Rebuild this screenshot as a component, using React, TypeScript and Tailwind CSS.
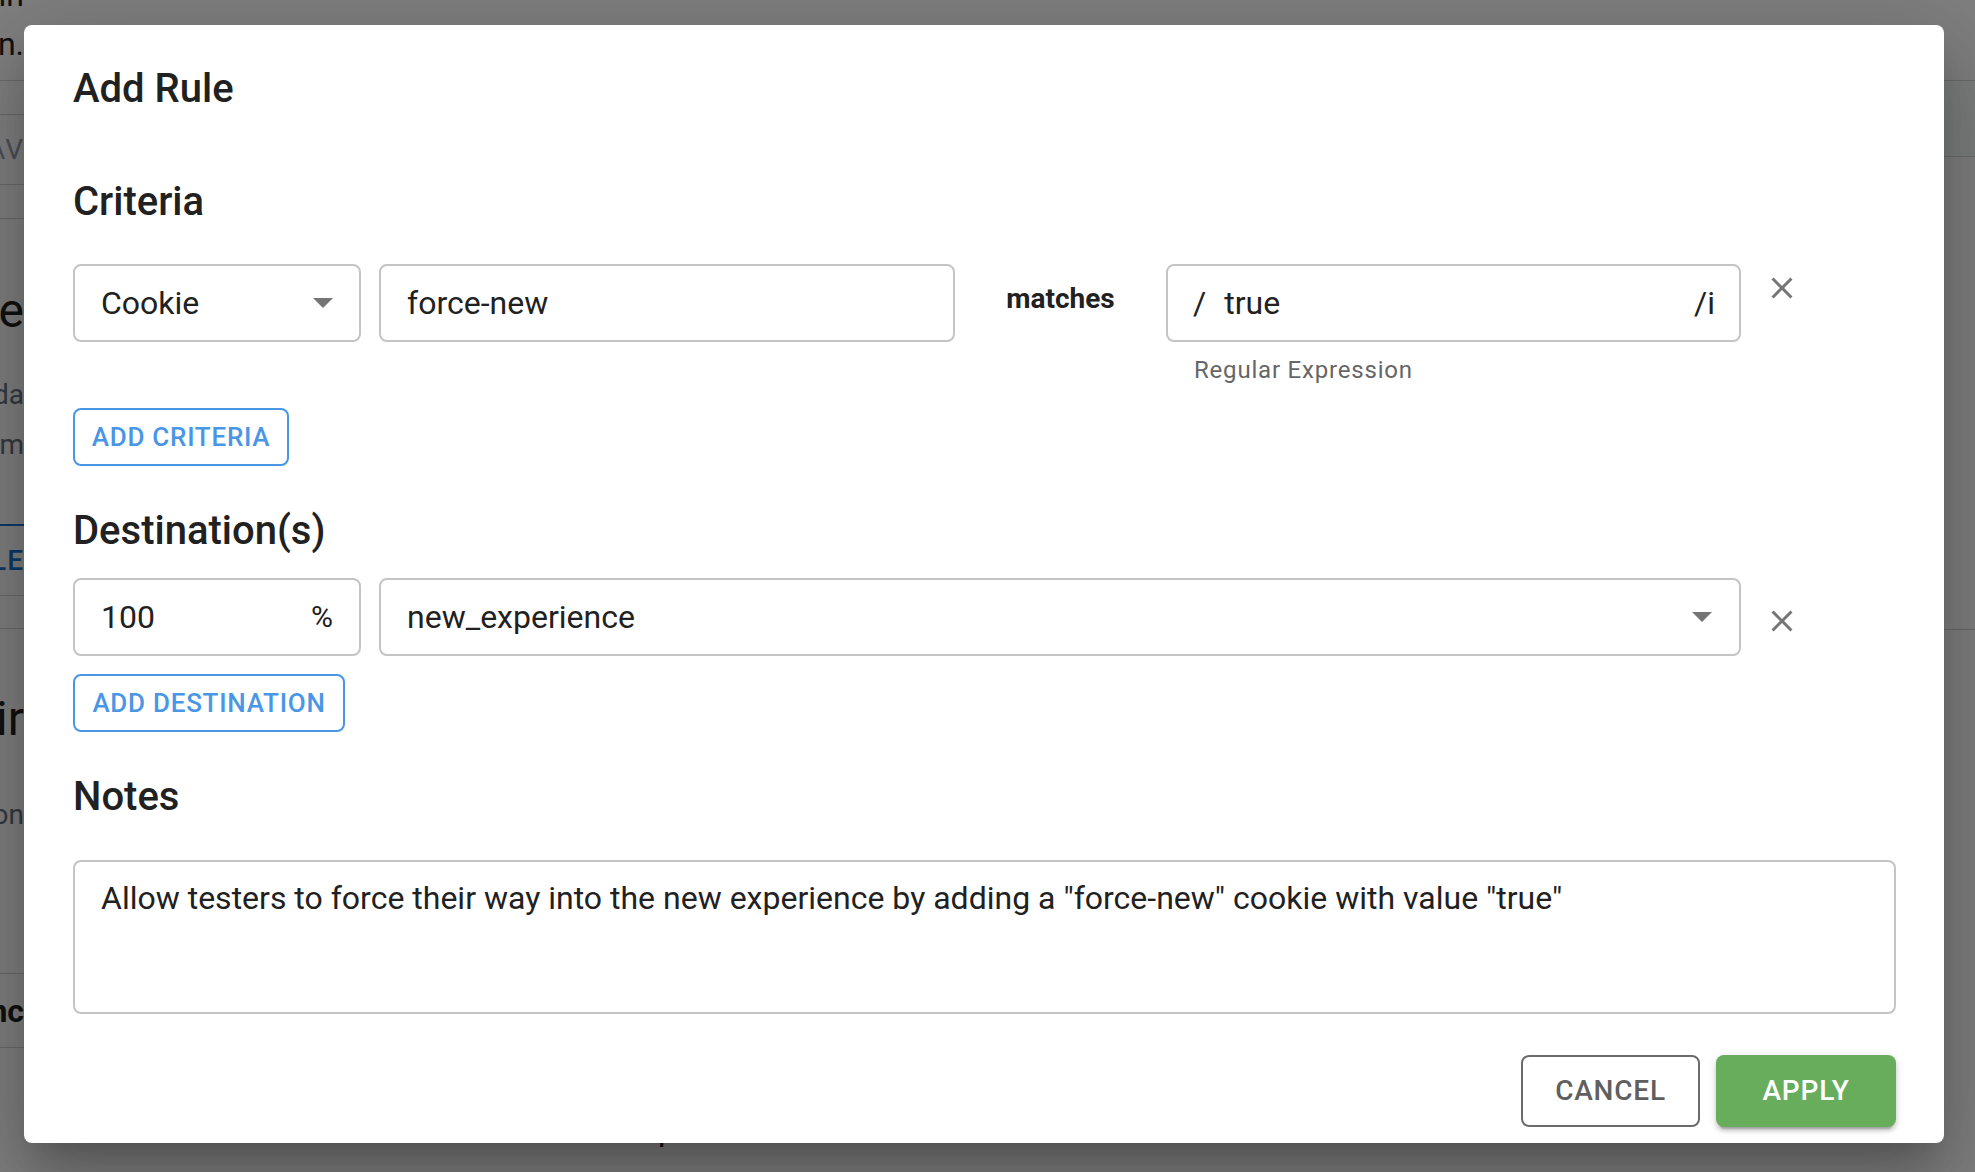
import React from 'react';

const CloseIcon = () => (
  <svg width="36" height="36" viewBox="0 0 24 24" className="fill-[#757575]">
    <path d="M19 6.41L17.59 5 12 10.59 6.41 5 5 6.41 10.59 12 5 17.59 6.41 19 12 13.41 17.59 19 19 17.59 13.41 12z" />
  </svg>
);

const ArrowDown = () => (
  <svg width="20" height="10" viewBox="7 10 10 5" className="fill-[#757575]">
    <path d="M7 10l5 5 5-5z" />
  </svg>
);

// page behind the dialog, only its edges show
const BackgroundPage = () => (
  <div className="flex h-full w-full bg-white">
    <div className="flex w-[24px] flex-col text-[#222]">
      <div className="h-[81px] border-b border-gray-300 overflow-hidden">
        <div className="-mt-[29px] flex flex-col items-end text-[32px] leading-[49px] whitespace-nowrap">
          <span>Domain</span>
          <span>Open in.</span>
        </div>
      </div>
      <div className="h-[34px] border-b border-gray-300" />
      <div className="h-[70px] border-b border-gray-300 flex items-center justify-end overflow-hidden">
        <span className="text-[28px] text-gray-400 tracking-[1px] whitespace-nowrap">NAV</span>
      </div>
      <div className="h-[34px] border-b border-gray-300" />
      <div className="h-[307px] border-b-2 border-[#1976d2] flex flex-col items-end overflow-hidden whitespace-nowrap">
        <span className="mt-[64px] text-[48px] leading-[56px]">Rule</span>
        <span className="mt-[38px] text-[28px] leading-[36px] text-gray-500">Upda</span>
        <span className="mt-[14px] text-[28px] leading-[36px] text-gray-500">Nam</span>
      </div>
      <div className="h-[70px] border-b border-gray-300 flex items-center justify-end overflow-hidden whitespace-nowrap">
        <span className="text-[28px] font-medium text-[#1976d2] tracking-[1px]">RULE</span>
      </div>
      <div className="h-[33px] border-b border-gray-300" />
      <div className="h-[345px] border-b border-gray-300 flex flex-col items-end overflow-hidden whitespace-nowrap">
        <span className="mt-[62px] text-[48px] leading-[56px]">Pair</span>
        <span className="mt-[50px] text-[28px] leading-[36px] text-gray-500">Option</span>
      </div>
      <div className="h-[74px] border-b border-gray-300 flex items-center justify-end overflow-hidden whitespace-nowrap">
        <span className="text-[32px] font-bold">Sync</span>
      </div>
    </div>
    <div className="flex-1 flex flex-col justify-end">
      <div className="pl-[440px] pb-[18px] text-[32px] text-[#222]">force_new_experience</div>
    </div>
    <div className="flex w-[31px] flex-col">
      <div className="h-[81px] border-b border-gray-300" />
      <div className="h-[76px] border-b border-gray-300 bg-gray-50" />
      <div className="h-[473px] border-b border-gray-300" />
    </div>
  </div>
);

const Field = ({ className, children }: { className?: string; children: React.ReactNode }) => (
  <div className={`h-[78px] border-2 border-[#c4c4c4] rounded-[8px] flex items-center text-[32px] leading-none text-[#212121] ${className || ''}`}>
    {children}
  </div>
);

const OutlineButton = ({ label, width }: { label: string; width: string }) => (
  <button
    type="button"
    className={`${width} self-start h-[58px] flex items-center justify-center border-2 border-[#4a96e6] rounded-[8px] text-[26px] font-medium tracking-[0.74px] text-[#4a96e6]`}
  >
    {label}
  </button>
);

const Heading = ({ children, className }: { children: React.ReactNode; className?: string }) => (
  <h2 className={`text-[40px] leading-[48px] font-medium text-[#212121] ${className || ''}`}>{children}</h2>
);

const App: React.FC = () => {
  return (
    <div className="relative h-[1172px] w-full overflow-hidden font-['Roboto',sans-serif]">
      <BackgroundPage />

      {/* Backdrop + dialog */}
      <div className="absolute inset-0 bg-black/50 flex items-start pl-[24px] pt-[25px]">
        <div className="w-[1920px] h-[1118px] bg-white rounded-[8px] pl-[49px] pr-[48px] pt-[40px] flex flex-col shadow-[0_22px_30px_-14px_rgba(0,0,0,0.2),0_48px_76px_6px_rgba(0,0,0,0.14),0_18px_92px_16px_rgba(0,0,0,0.12)]">
          <Heading>Add Rule</Heading>

          <Heading className="mt-[65px]">Criteria</Heading>

          <div className="mt-[38px] flex items-start">
            <Field className="w-[288px] justify-between px-[26px]">
              <span>Cookie</span>
              <ArrowDown />
            </Field>
            <Field className="ml-[18px] w-[576px] pl-[26px]">
              <span>force-new</span>
            </Field>
            <div className="w-[211px] h-[78px] flex items-center justify-center pb-[8px]">
              <span className="text-[28px] font-bold text-[#212121]">matches</span>
            </div>
            <div className="w-[575px] flex flex-col">
              <Field className="pl-[25px] pr-[24px]">
                <span>/</span>
                <span className="ml-[18px] flex-1">true</span>
                <span>/i</span>
              </Field>
              <div className="mt-[8px] pl-[28px] text-[24px] leading-[40px] tracking-[0.8px] text-[#666]">
                Regular Expression
              </div>
            </div>
            <div className="ml-[23px] mt-[6px]">
              <CloseIcon />
            </div>
          </div>

          <div className="mt-[18px] flex">
            <OutlineButton label="ADD CRITERIA" width="w-[216px]" />
          </div>

          <Heading className="mt-[41px]">Destination(s)</Heading>

          <div className="mt-[23px] flex items-start">
            <Field className="w-[288px] justify-between px-[26px]">
              <span>100</span>
              <span className="text-[30px]">%</span>
            </Field>
            <Field className="ml-[18px] w-[1362px] justify-between pl-[26px] pr-[27px]">
              <span>new_experience</span>
              <ArrowDown />
            </Field>
            <div className="ml-[23px] mt-[25px]">
              <CloseIcon />
            </div>
          </div>

          <div className="mt-[18px] flex">
            <OutlineButton label="ADD DESTINATION" width="w-[272px]" />
          </div>

          <Heading className="mt-[41px]">Notes</Heading>

          <div className="mt-[39px] w-[1823px] h-[154px] border-2 border-[#c4c4c4] rounded-[8px] pl-[26px] pt-[13px] text-[32px] leading-[46px] text-[#212121]">
            Allow testers to force their way into the new experience by adding a "force-new" cookie with value "true"
          </div>

          <div className="mt-[41px] flex justify-end gap-[16px]">
            <button
              type="button"
              className="w-[179px] h-[72px] border-2 border-[#6b6b6b] rounded-[8px] text-[28px] font-medium tracking-[0.8px] text-[#5f5f5f]"
            >
              CANCEL
            </button>
            <button
              type="button"
              className="w-[180px] h-[72px] rounded-[8px] bg-[#67ad5b] text-[28px] font-medium tracking-[0.8px] text-white shadow-[0_6px_2px_-4px_rgba(0,0,0,0.2),0_4px_4px_0_rgba(0,0,0,0.14),0_2px_10px_0_rgba(0,0,0,0.12)]"
            >
              APPLY
            </button>
          </div>
        </div>
      </div>
    </div>
  );
};

export default App;
